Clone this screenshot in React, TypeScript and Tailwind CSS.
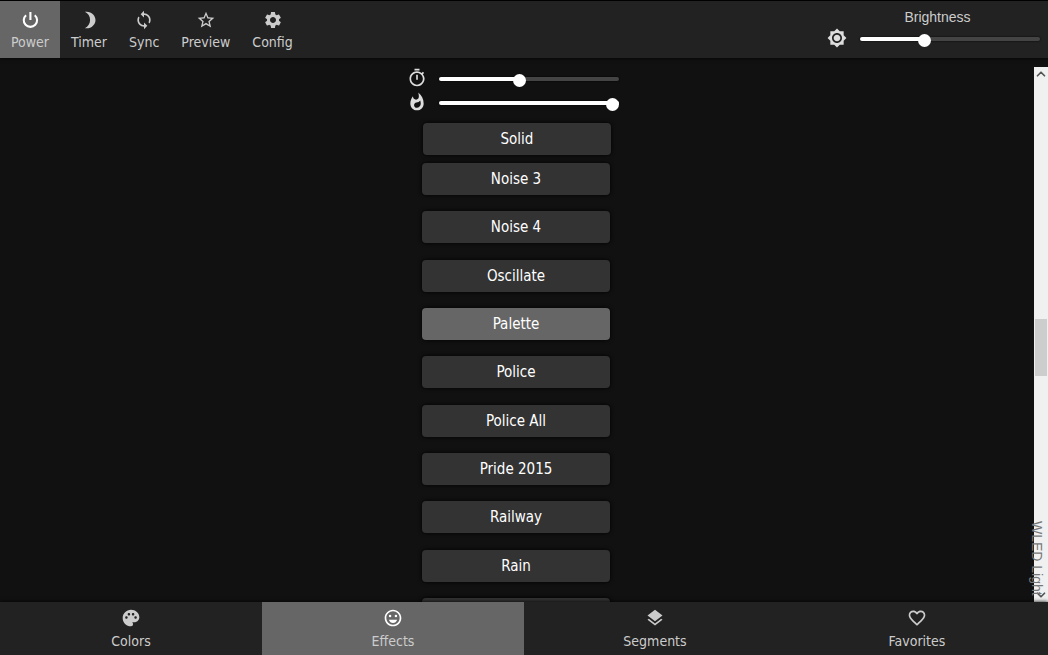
import { useState } from 'react';
import type { ComponentType, CSSProperties } from 'react';
import { ChevronDown, ChevronUp } from 'lucide-react';
import {
  MdBrightness7,
  MdFavoriteBorder,
  MdLayers,
  MdLoop,
  MdOutlineEmojiEmotions,
  MdOutlineTimer,
  MdPalette,
  MdSettings,
  MdStarBorder,
  MdWhatshot,
} from 'react-icons/md';

type IconProps = { className?: string };

function PowerIcon({ className }: IconProps) {
  return (
    <svg viewBox="0 0 24 24" fill="none" stroke="currentColor" strokeWidth="2.5" className={className}>
      <path d="M12.5 2.5v9.5M7.3 6.2a8 8 0 1 0 10.4 0" />
    </svg>
  );
}

function MoonIcon({ className }: IconProps) {
  return (
    <svg viewBox="0 0 24 24" fill="currentColor" className={className}>
      <path d="M7 2.2C14 .8 19.8 6 19.8 12S14 23.2 7 21.8C11 20 13.3 16.3 13.3 12S11 4 7 2.2Z" />
    </svg>
  );
}

const actions = [
  { icon: PowerIcon, label: 'Power' },
  { icon: MoonIcon, label: 'Timer' },
  { icon: MdLoop, label: 'Sync' },
  { icon: MdStarBorder, label: 'Preview' },
  { icon: MdSettings, label: 'Config' },
];

const tabs = [
  { icon: MdPalette, label: 'Colors' },
  { icon: MdOutlineEmojiEmotions, label: 'Effects' },
  { icon: MdLayers, label: 'Segments' },
  { icon: MdFavoriteBorder, label: 'Favorites' },
];

const effects = [
  'Noise 3',
  'Noise 4',
  'Oscillate',
  'Palette',
  'Police',
  'Police All',
  'Pride 2015',
  'Railway',
  'Rain',
];

function Slider({ label, initial }: { label: string; initial: number }) {
  const [value, setValue] = useState(initial);
  return (
    <input
      type="range"
      aria-label={label}
      min={0}
      max={255}
      value={value}
      onChange={(e) => setValue(Number(e.target.value))}
      style={{ '--fill': `${(value / 255) * 100}%` } as CSSProperties}
      className="block h-4 w-[180px] cursor-pointer appearance-none bg-transparent [&::-webkit-slider-runnable-track]:h-1 [&::-webkit-slider-runnable-track]:rounded-xs [&::-webkit-slider-runnable-track]:bg-[linear-gradient(to_right,#fff_var(--fill),#444_var(--fill))] [&::-webkit-slider-runnable-track]:shadow-[0_0_2px_#000] [&::-webkit-slider-thumb]:-mt-[3px] [&::-webkit-slider-thumb]:size-[13px] [&::-webkit-slider-thumb]:appearance-none [&::-webkit-slider-thumb]:rounded-full [&::-webkit-slider-thumb]:bg-white"
    />
  );
}

function BarButton({
  icon: Icon,
  label,
  active,
  className,
  onClick,
}: {
  icon: ComponentType<IconProps>;
  label: string;
  active: boolean;
  className: string;
  onClick: () => void;
}) {
  return (
    <button
      type="button"
      onClick={onClick}
      className={`flex flex-col items-center text-[14px] leading-5 text-[#ccc] ${active ? 'bg-[#666]' : ''} ${className}`}
    >
      <Icon className={`size-5 ${active ? 'text-white' : ''}`} />
      <span>{label}</span>
    </button>
  );
}

function EffectButton({ name, active, onClick }: { name: string; active: boolean; onClick: () => void }) {
  return (
    <button
      type="button"
      onClick={onClick}
      className={`h-8 w-[188px] shrink-0 rounded-sm text-[15px] leading-8 text-white shadow-[0_0_4px_#000] ${active ? 'bg-[#666]' : 'bg-[#333]'}`}
    >
      {name}
    </button>
  );
}

export default function App() {
  const [power, setPower] = useState(true);
  const [tab, setTab] = useState('Effects');
  const [effect, setEffect] = useState('Palette');

  return (
    <div className="flex h-screen flex-col overflow-hidden bg-[#111] font-['DejaVu_Sans_Condensed','Noto_Sans',sans-serif]">
      <header className="z-10 flex shrink-0 justify-between border-t border-black bg-[#222] shadow-[0_0_4px_#000]">
        <div className="flex">
          {actions.map((action) => (
            <BarButton
              key={action.label}
              icon={action.icon}
              label={action.label}
              active={action.label === 'Power' && power}
              className="gap-[2px] px-[11px] pt-[9px] pb-[6px]"
              onClick={() => action.label === 'Power' && setPower(!power)}
            />
          ))}
        </div>
        <div className="pt-[6px] font-['Liberation_Sans',sans-serif]">
          <p className="text-center text-[14px] leading-5 text-[#ccc]">Brightness</p>
          <div className="flex items-start gap-[13px] pr-2">
            <MdBrightness7 className="mt-px size-5 text-[#ddd]" />
            <div className="pt-1">
              <Slider label="Brightness" initial={88} />
            </div>
          </div>
        </div>
      </header>

      <main className="relative flex min-h-0 flex-1">
        <div className="flex flex-1 flex-col items-center overflow-hidden pt-[9px]">
          <div className="flex h-6 shrink-0 items-center gap-3 pr-[9px]">
            <MdOutlineTimer className="mb-[2px] size-5 text-[#ddd]" />
            <Slider label="Effect speed" initial={113} />
          </div>
          <div className="flex h-6 shrink-0 items-center gap-3 pr-[9px]">
            <MdWhatshot className="mb-[2px] size-5 text-[#ddd]" />
            <Slider label="Effect intensity" initial={255} />
          </div>
          <div className="flex shrink-0 py-2">
            <EffectButton name="Solid" active={effect === 'Solid'} onClick={() => setEffect('Solid')} />
          </div>
          <div className="flex min-h-[467px] shrink-0 flex-col justify-between pr-[2px]">
            {effects.map((name) => (
              <EffectButton key={name} name={name} active={effect === name} onClick={() => setEffect(name)} />
            ))}
            <div className="h-8 rounded-sm bg-[#333] shadow-[0_0_4px_#000]" />
          </div>
        </div>

        <div className="mt-[9px] flex w-[14px] flex-col items-center bg-[#f0f0f0] text-[#555]">
          <ChevronUp className="size-[14px]" strokeWidth={3} />
          <div className="flex-[9]" />
          <div className="h-[57px] w-3 bg-[#cdcdcd]" />
          <div className="flex-[8]" />
          <ChevronDown className="size-[14px]" strokeWidth={3} />
        </div>
        <span className="absolute right-[3px] bottom-[6px] font-['Liberation_Sans',sans-serif] text-[14px] leading-4 text-[#777] [writing-mode:vertical-rl]">
          WLED Light
        </span>
      </main>

      <nav className="z-10 grid shrink-0 grid-cols-4 bg-[#222] shadow-[0_0_4px_#000]">
        {tabs.map((item) => (
          <BarButton
            key={item.label}
            icon={item.icon}
            label={item.label}
            active={item.label === tab}
            className="gap-[3px] pt-[6px] pb-1"
            onClick={() => setTab(item.label)}
          />
        ))}
      </nav>
    </div>
  );
}
